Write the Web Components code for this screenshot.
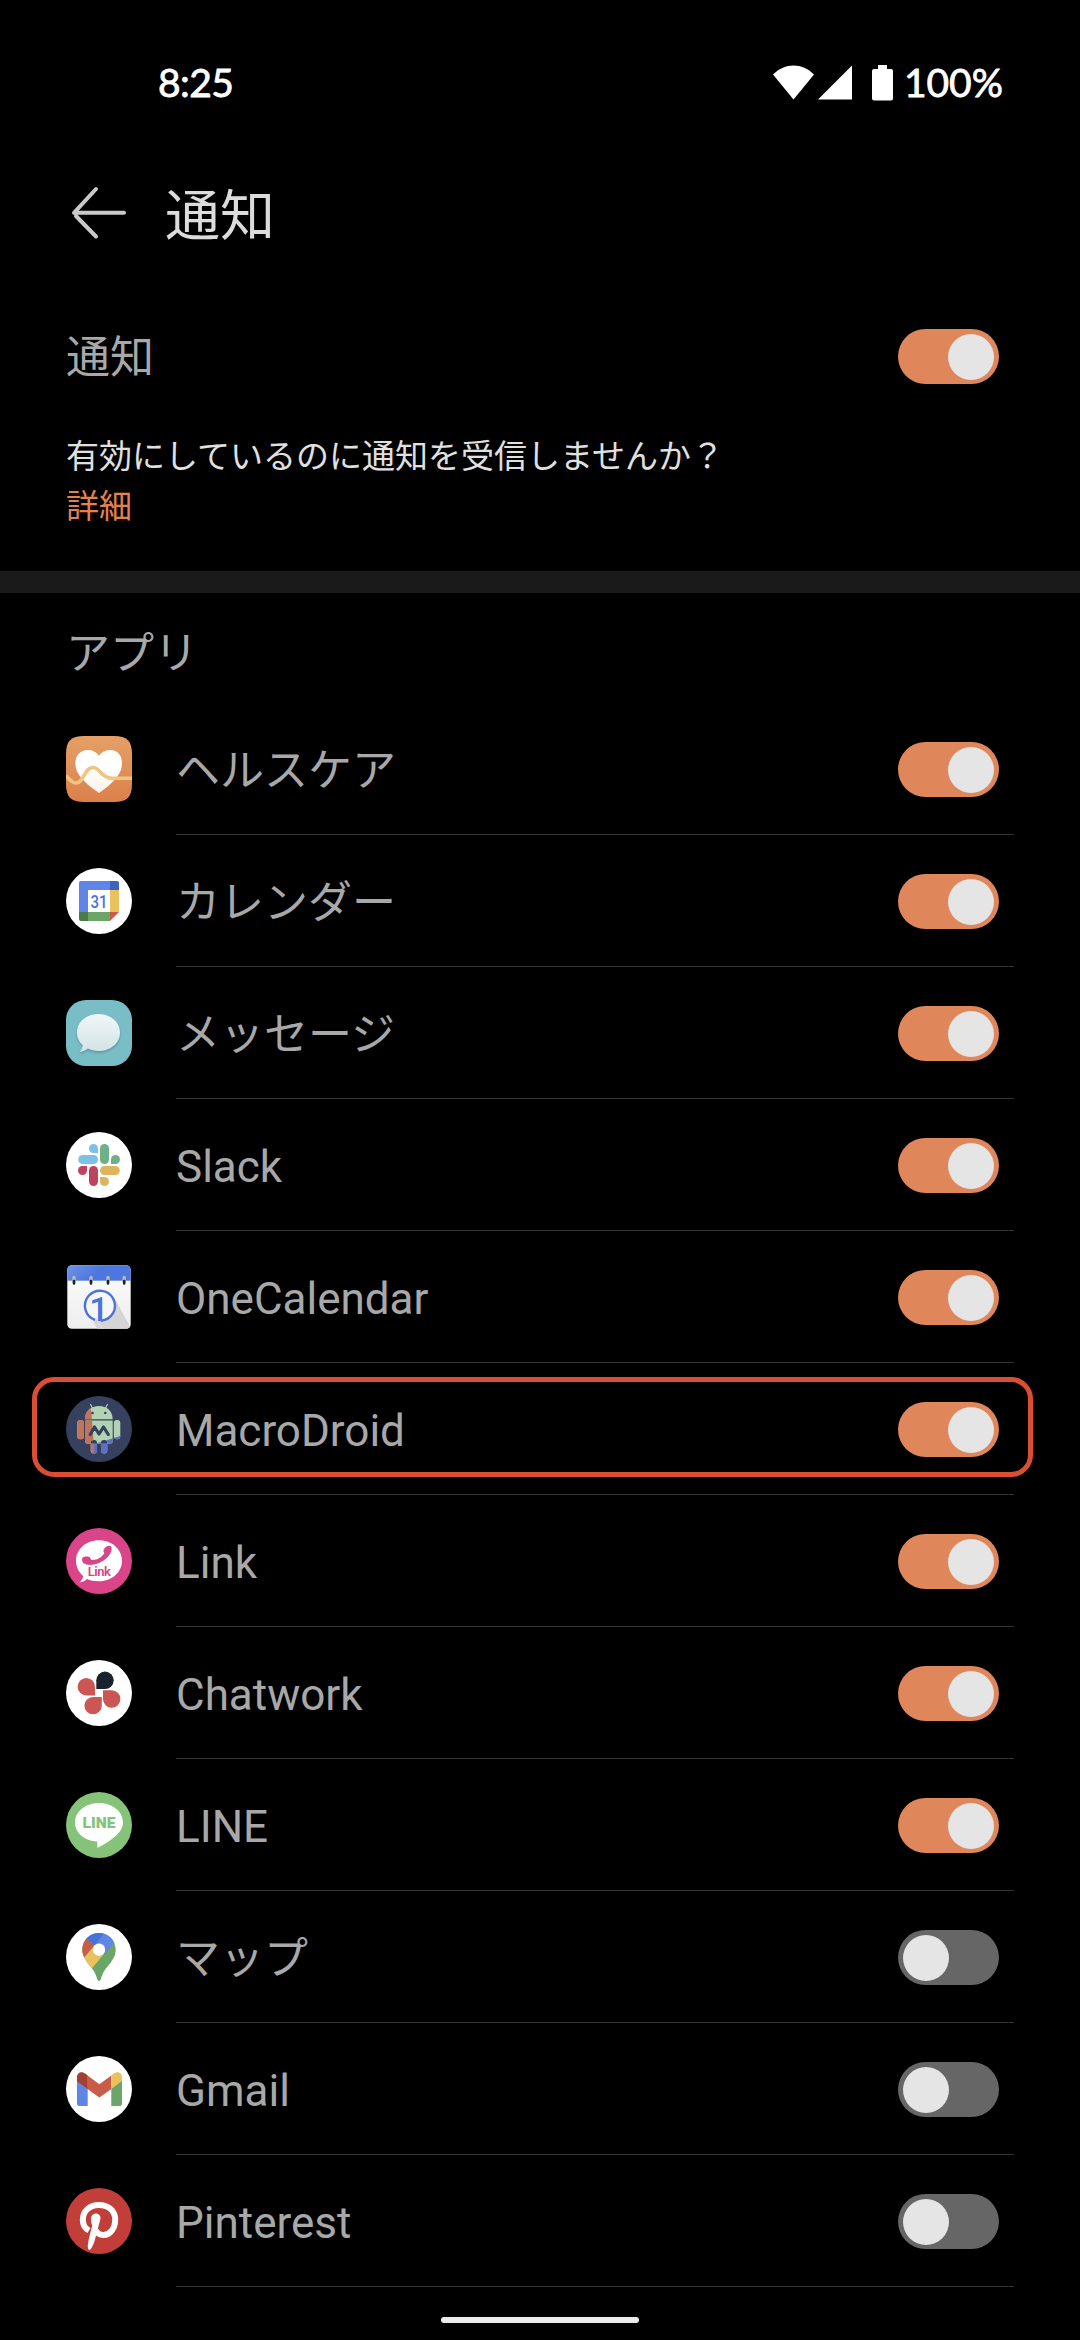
<!DOCTYPE html>
<html lang="ja">
<head>
<meta charset="utf-8">
<title>通知</title>
<style>
  body {
    margin: 0;
    width: 1080px;
    height: 2340px;
    overflow: hidden;
    background: #000;
    color: #a8a8a8;
    font-family: Roboto, "Noto Sans CJK JP", sans-serif;
    font-size: 44px;
  }
</style>
</head>
<body>
<notification-screen></notification-screen>

<script>
const icons = {
  health: `
    <defs>
      <linearGradient id="bg" x1="0" y1="0" x2="0" y2="1"><stop offset="0" stop-color="#e5a067"/><stop offset="1" stop-color="#db804b"/></linearGradient>
      <linearGradient id="heart" x1="0" y1="0" x2="0" y2="1"><stop offset=".5" stop-color="#fff"/><stop offset="1" stop-color="#fbeee8"/></linearGradient>
    </defs>
    <path fill="url(#bg)" d="M0 18C0 5 5 0 18 0h30c13 0 18 5 18 18v30c0 13-5 18-18 18H18C5 66 0 61 0 48z"/>
    <path fill="url(#heart)" d="M33 57C26 52 19 47 14.500 41C11 36.500 9.300 32 9.300 27C9.300 19.500 14.500 14 21.500 14C26.500 14 30.500 16 33 19.800C35.500 16 39.500 14 44.500 14C51.500 14 56 19.500 56 27C56 32 54.500 36.500 51 41C46.500 47 40 52 33 57z"/>
    <path fill="none" stroke="#efc580" stroke-width="3.600" d="M0 39.500C4 44 6.500 47 10 47C18 47 18 31.500 27 31.500C34 31.500 35 42.300 46 42.300H66"/>`,
  calendar: `
    <circle cx="33" cy="33" r="33" fill="#fff"/>
    <path fill="#5f85e6" d="M15 13h29v9H22v22h-9V15a2 2 0 0 1 2-2z"/>
    <path fill="#3e62bf" d="M44 13h7a2 2 0 0 1 2 2v7h-9z"/>
    <path fill="#eac25d" d="M44 22h9v22h-9z"/>
    <path fill="#6ba567" d="M22 44h22v9H22z"/>
    <path fill="#4a7b48" d="M13 44h9v9h-7a2 2 0 0 1-2-2z"/>
    <path fill="#cb5b48" d="M44 44h9l-9 9z"/>
    <text x="33" y="39.700" text-anchor="middle" font-size="18" font-weight="500" fill="#4873de" textLength="17" lengthAdjust="spacingAndGlyphs">31</text>`,
  messages: `
    <defs>
      <linearGradient id="bubble" x1="0" y1="0" x2="0" y2="1"><stop offset="0" stop-color="#f0f7f8"/><stop offset="1" stop-color="#d2e4e6"/></linearGradient>
      <filter id="shade" x="-20%" y="-20%" width="140%" height="150%"><feDropShadow dx="0" dy="1.500" stdDeviation="1.300" flood-color="#3c7c84" flood-opacity=".6"/></filter>
    </defs>
    <rect width="66" height="66" rx="20" fill="#79bdc6"/>
    <path filter="url(#shade)" fill="url(#bubble)" d="M32.500 14C44.500 14 54 22 54 32.500S44.500 51 32.500 51C28.500 51 25 50 22 48.600C19.500 50.500 17 51.800 13.600 52C15.500 50 16.600 47.500 16.800 45.300C13 42 11 37.500 11 32.500C11 22 20.500 14 32.500 14z"/>`,
  slack: `
    <circle cx="33" cy="33" r="33" fill="#fff"/>
    <path fill="#7cc1e8" d="M32 21h-4.500A4.500 4.500 0 1 1 32 16.500z"/>
    <rect fill="#7cc1e8" x="12.200" y="23" width="19.800" height="9" rx="4.500"/>
    <rect fill="#6fb086" x="34" y="12" width="9" height="20" rx="4.500"/>
    <path fill="#6fb086" d="M45 32v-4.500a4.500 4.500 0 1 1 4.500 4.500z"/>
    <path fill="#c0435d" d="M21 34v4.500a4.500 4.500 0 1 1-4.500-4.500z"/>
    <rect fill="#c0435d" x="23" y="34" width="9" height="20" rx="4.500"/>
    <rect fill="#ddb55e" x="34" y="34" width="19.800" height="9" rx="4.500"/>
    <path fill="#ddb55e" d="M34 45h4.500a4.500 4.500 0 1 1-4.500 4.500z"/>`,
  onecalendar: `
    <defs>
      <linearGradient id="page" x1="0" y1="0" x2="0" y2="1"><stop offset="0" stop-color="#fdfdfd"/><stop offset="1" stop-color="#ededed"/></linearGradient>
      <linearGradient id="band" x1="0" y1="0" x2="1" y2=".3"><stop offset="0" stop-color="#7296e6"/><stop offset=".6" stop-color="#4d76de"/></linearGradient>
      <clipPath id="sheet"><rect x="1.300" y="1.300" width="63.400" height="63.400" rx="4.500"/></clipPath>
    </defs>
    <g clip-path="url(#sheet)">
      <rect width="66" height="66" fill="url(#page)"/>
      <path fill="#d5d5d5" d="M49.500 36L66 66H32L25 53L36 57z"/>
      <path stroke="#eee" stroke-width=".8" d="M32 59l5 6"/>
      <circle cx="34" cy="41.700" r="14" fill="#f6f6f6"/>
      <rect width="66" height="16.700" fill="url(#band)"/>
    </g>
    <path stroke="#b9b9b9" stroke-width="3.400" stroke-linecap="round" d="M8 13.500v4M25 13.500v4M42 13.500v4M58.200 13.500v4"/>
    <path stroke="#222" stroke-width="2.600" stroke-linecap="round" d="M8 17v2.500M25 17v2.500M42 17v2.500M58.200 17v2.500"/>
    <path fill="none" stroke="#4a73dc" stroke-width="2.400" d="M29 55.900A15 15 0 1 1 35 56.700"/>
    <text x="33" y="57" text-anchor="middle" font-size="34" font-weight="500" fill="#4a73dc">1</text>`,
  macrodroid: `
    <defs>
      <clipPath id="robot">
        <path d="M19 23.300C19 15 25 10 33 10s13.700 5 13.700 13.300zM19 24.500h27.700v20.800a2.500 2.500 0 0 1-2.500 2.500H21.500a2.500 2.500 0 0 1-2.500-2.500z"/>
        <rect x="11.300" y="24" width="6.700" height="19.200" rx="3"/>
        <rect x="47.800" y="24" width="6.500" height="19.200" rx="3"/>
        <rect x="24.700" y="44" width="6.300" height="13.400" rx="2.800"/>
        <rect x="35" y="44" width="6.300" height="13.400" rx="2.800"/>
      </clipPath>
    </defs>
    <circle cx="33" cy="33" r="33" fill="#35415f"/>
    <g clip-path="url(#robot)">
      <rect width="66" height="66" fill="#b2d2b1"/>
      <path fill="#5f71c0" d="M27 48.500L56 39.500V66H27z"/>
      <path fill="#c0745c" d="M0 0H22L25.500 17L27.800 48V66H0z"/>
    </g>
    <path stroke="#b2d2b1" stroke-width="1.200" stroke-linecap="round" d="M24.600 8.500l2 4M41.400 8.500l-2 4"/>
    <circle cx="26.500" cy="17" r="1.300" fill="#35415f"/>
    <circle cx="39.300" cy="17" r="1.300" fill="#35415f"/>
    <path fill="none" stroke="#35415f" stroke-width="3.200" stroke-linecap="round" stroke-linejoin="round" d="M24.300 38.500l4.200-7.500L33 38l4.500-7l4.800 7.500"/>`,
  link: `
    <circle cx="33" cy="33" r="33" fill="#d94588"/>
    <path fill="#fff" d="M33 12.300C46 12.300 56 21.300 56 32.800S46 53.300 33 53.300C28 53.300 24 52.300 21 51C18.500 53.200 16.500 54 13.300 54.500C15.500 52.500 17 50 17.300 48.200C12.500 44 10 38.800 10 32.800C10 21.300 20 12.300 33 12.300z"/>
    <path fill="#d94588" d="M16 31.500C16 29 18.500 28 23 28.800C24.500 29.500 24.500 31.200 25.500 31.900C31 32.300 35.500 29.500 38.200 25.500C38.300 24 37 23.500 37.500 22C39 18.500 43 17 44.800 18.300C47 20.500 45 26 41 29.800C36 34.500 29 37.500 22 36.800C18.500 36.500 16 34.500 16 31.500z"/>
    <text x="33.300" y="48" text-anchor="middle" font-size="13" font-weight="600" fill="#d94588" textLength="23">Link</text>`,
  chatwork: `
    <circle cx="33" cy="33" r="33" fill="#fff"/>
    <path fill="#1a2230" d="M30.300 29V20.300A8.700 8.700 0 1 1 39 29z"/>
    <g fill="#cc5654">
      <path d="M29 35.400H20.300A8.700 8.700 0 1 1 29 26.700z"/>
      <path d="M35.800 36.900V45.600A8.700 8.700 0 1 1 27.100 36.900z"/>
      <path d="M37 30.300H45.700A8.700 8.700 0 1 1 37 39z"/>
    </g>`,
  line: `
    <circle cx="33" cy="33" r="33" fill="#84c378"/>
    <path fill="#fff" d="M33 11C46.500 11 57 19.500 57 30.500C57 36 53.800 40.300 49 44.500C44 49 37.500 53 31.300 56V49.500C18.500 49 9 40.800 9 30.500C9 19.500 19.500 11 33 11z"/>
    <text x="33" y="36" text-anchor="middle" font-size="15.500" font-weight="900" fill="#84c378" textLength="33" lengthAdjust="spacingAndGlyphs">LINE</text>`,
  maps: `
    <defs>
      <clipPath id="pin"><path d="M33 9C42.300 9 49.700 16.300 49.700 25.600C49.700 31.500 47 35.500 44 39.500C39.500 45 37 47.500 34.700 55.500C34.200 57.400 31.800 57.400 31.300 55.500C29.500 48.500 27 45.500 23 40.700C19.500 36.300 16.300 31.500 16.300 25.600C16.300 16.300 23.700 9 33 9z"/></clipPath>
    </defs>
    <circle cx="33" cy="33" r="33" fill="#fff"/>
    <g clip-path="url(#pin)">
      <rect width="66" height="66" fill="#6ba567"/>
      <path fill="#c95b47" d="M14 9.200L28.500 21.500L18.300 33.500L14 38z"/>
      <path fill="#4672dc" d="M14 9.200V5H42L28.500 21.500z"/>
      <path fill="#5f85e6" d="M42 5H60L47.900 18.800L37.600 30.300L28.300 21.700z"/>
      <path fill="#eac25d" d="M18.200 33.600L28.300 21.700L37.600 30.300L25.900 44.400L14 50z"/>
    </g>
    <circle cx="33" cy="25.700" r="6.200" fill="#fff"/>`,
  gmail: `
    <circle cx="33" cy="33" r="33" fill="#fff"/>
    <path fill="#5f85e6" d="M11 24L21.700 31V50H13.300A2.300 2.300 0 0 1 11 47.700z"/>
    <path fill="#6ba567" d="M56 24L45.300 31V50H53.700A2.300 2.300 0 0 0 56 47.700z"/>
    <path fill="#c95b47" d="M21.500 19.500L33.400 28.300L45.300 19.500V33L33.400 41.500L21.500 33z"/>
    <path fill="#a43f32" d="M11 21C11 16.500 16 14.500 19.500 17.800L21.700 19.600V33L11 25z"/>
    <path fill="#eac25d" d="M56 21C56 16.500 51 14.500 47.500 17.800L45.300 19.600V33L56 25z"/>`,
  pinterest: `
    <circle cx="33" cy="33" r="33" fill="#c23f39"/>
    <path fill="none" stroke="#fff" stroke-width="6" d="M23 42.500C18.500 40 16.800 36 16.800 32C16.800 23 23.500 17 33 17C42.500 17 49.200 23 49.200 31.500C49.200 40.500 44 47 37.500 47C34 47 31 45.500 29.800 42"/>
    <path fill="#fff" d="M25 31.500C25 27.500 27 25.500 30 25.500C33 25.500 35 28 34.300 31.500L29.500 49.500C28.300 54.500 26.500 59 24 62C22 62 21.500 60 21.900 56.500C22.500 51 24.500 44 26.300 37.500C25.300 35.500 25 33.500 25 31.500z"/>`
}

const apps = [
  { name: 'ヘルスケア', icon: 'health', on: true },
  { name: 'カレンダー', icon: 'calendar', on: true },
  { name: 'メッセージ', icon: 'messages', on: true },
  { name: 'Slack', icon: 'slack', on: true },
  { name: 'OneCalendar', icon: 'onecalendar', on: true },
  { name: 'MacroDroid', icon: 'macrodroid', on: true, marked: true },
  { name: 'Link', icon: 'link', on: true },
  { name: 'Chatwork', icon: 'chatwork', on: true },
  { name: 'LINE', icon: 'line', on: true },
  { name: 'マップ', icon: 'maps', on: false },
  { name: 'Gmail', icon: 'gmail', on: false },
  { name: 'Pinterest', icon: 'pinterest', on: false }
]

class StatusBar extends HTMLElement
{
  constructor ()
  {
    super()
    this.attachShadow({ mode: 'open' }).innerHTML = `
      <style>
        :host {
          display: flex;
          align-items: center;
          justify-content: space-between;
          box-sizing: border-box;
          height: 166px;
          padding: 0 77px 0 158px;
          color: #fff;
          font-family: Lato, sans-serif;
          font-size: 39px;
          line-height: 46px;
          -webkit-text-stroke: .8px #fff;
        }
        .time { padding-bottom: 2px; letter-spacing: -.6px; }
        .level { padding-bottom: 2px; }
        .right { display: flex; align-items: center; }
        .battery { margin: 0 11px 0 20px; }
        svg { display: block; fill: #fff; }
      </style>
      <span class="time"><slot name="time"></slot></span>
      <div class="right">
        <svg width="79" height="36" viewBox="0 0 79 36">
          <path d="M0 9.500C12-2.500 29-2.500 41 9.500L20.500 34.500z"/>
          <path d="M45 34.500L79 .5V34.500z"/>
        </svg>
        <svg class="battery" width="21" height="36" viewBox="0 0 21 36">
          <path d="M6 0h9v4h4a2 2 0 0 1 2 2v27.500a2 2 0 0 1-2 2H2a2 2 0 0 1-2-2V6a2 2 0 0 1 2-2h4z"/>
        </svg>
        <span class="level"><slot name="battery"></slot></span>
      </div>
    `
  }
}

class PageHeader extends HTMLElement
{
  constructor ()
  {
    super()
    this.attachShadow({ mode: 'open' }).innerHTML = `
      <style>
        :host {
          display: flex;
          align-items: center;
          gap: 37px;
          height: 94px;
          margin-bottom: 23px;
          padding-left: 70px;
          color: #dcdcdc;
          font-size: 55px;
          line-height: 64px;
        }
        .title { padding-top: 6px; }
        svg { display: block; fill: none; stroke: #c9c9c9; stroke-width: 4; stroke-linecap: round; stroke-linejoin: round; }
      </style>
      <svg width="58" height="54" viewBox="0 0 58 54"><path d="M26 3L4 26.800H54M26 50.500L6 30"/></svg>
      <span class="title"><slot></slot></span>
    `
  }
}

class ToggleSwitch extends HTMLElement
{
  constructor ()
  {
    super()
    this.attachShadow({ mode: 'open' }).innerHTML = `
      <style>
        :host {
          display: flex;
          align-items: center;
          box-sizing: border-box;
          flex: none;
          width: 101px;
          height: 55px;
          padding: 0 5px;
          border-radius: 28px;
          background: #666;
        }
        :host([on]) {
          justify-content: flex-end;
          background: #df875a;
        }
        i {
          width: 46px;
          height: 46px;
          border-radius: 50%;
          background: #e5e5e5;
        }
      </style>
      <i></i>
    `
  }
}

class AppIcon extends HTMLElement
{
  connectedCallback ()
  {
    this.attachShadow({ mode: 'open' }).innerHTML = `
      <style>
        :host { display: block; flex: none; width: 66px; height: 66px; }
        svg { display: block; font-family: Roboto, sans-serif; }
      </style>
      <svg width="66" height="66" viewBox="0 0 66 66">${icons[this.getAttribute('name')]}</svg>
    `
  }
}

class AppRow extends HTMLElement
{
  constructor ()
  {
    super()
    this.attachShadow({ mode: 'open' }).innerHTML = `
      <style>
        :host {
          display: flex;
          align-items: center;
          gap: 44px;
          position: relative;
          height: 132px;
          padding: 0 66px;
        }
        .body {
          display: flex;
          flex: 1;
          align-items: center;
          justify-content: space-between;
          box-sizing: border-box;
          height: 132px;
          padding: 2px 15px 0 0;
          border-bottom: 1px solid #333;
        }
        .label { padding-top: 3px; line-height: 52px; }
        /* ring drawn over the row, wider than its content */
        :host([marked])::after {
          content: '';
          position: absolute;
          box-sizing: border-box;
          inset: 14px 47px 18px 32px;
          border: 5px solid #da4f34;
          border-radius: 22px;
        }
      </style>
      <slot name="icon"></slot>
      <div class="body">
        <span class="label"><slot></slot></span>
        <slot name="toggle"></slot>
      </div>
    `
  }
}

class NotificationScreen extends HTMLElement
{
  constructor ()
  {
    super()
    this.attachShadow({ mode: 'open' }).innerHTML = `
      <style>
        :host { display: flex; flex-direction: column; height: 2340px; }
        .master {
          display: flex;
          align-items: center;
          justify-content: space-between;
          height: 147px;
          padding: 0 81px 0 66px;
          line-height: 52px;
        }
        .master span { padding-top: 3px; }
        .hint {
          padding: 2px 66px 39px;
          color: #e0e0e0;
          font-size: 33px;
          line-height: 50px;
        }
        .hint a { display: block; color: #e2834f; }
        .band { height: 22px; background: #1a1a1a; }
        h2 {
          box-sizing: border-box;
          height: 110px;
          margin: 0;
          padding: 35px 66px 0;
          font-size: 44px;
          font-weight: 400;
          line-height: 52px;
        }
        .home {
          width: 198px;
          height: 6px;
          margin: 30px auto 0;
          border-radius: 3px;
          background: #ececec;
        }
      </style>
      <status-bar>
        <span slot="time">8:25</span>
        <span slot="battery">100%</span>
      </status-bar>
      <page-header>通知</page-header>
      <div class="master"><span>通知</span><toggle-switch on></toggle-switch></div>
      <div class="hint">有効にしているのに通知を受信しませんか？<a>詳細</a></div>
      <div class="band"></div>
      <h2>アプリ</h2>
      ${apps.map(app => `
        <app-row ${app.marked ? 'marked' : ''}>
          <app-icon slot="icon" name="${app.icon}"></app-icon>
          ${app.name}
          <toggle-switch slot="toggle" ${app.on ? 'on' : ''}></toggle-switch>
        </app-row>`).join('')}
      <div class="home"></div>
    `
  }
}

customElements.define('status-bar', StatusBar)
customElements.define('page-header', PageHeader)
customElements.define('toggle-switch', ToggleSwitch)
customElements.define('app-icon', AppIcon)
customElements.define('app-row', AppRow)
customElements.define('notification-screen', NotificationScreen)
</script>
</body>
</html>
